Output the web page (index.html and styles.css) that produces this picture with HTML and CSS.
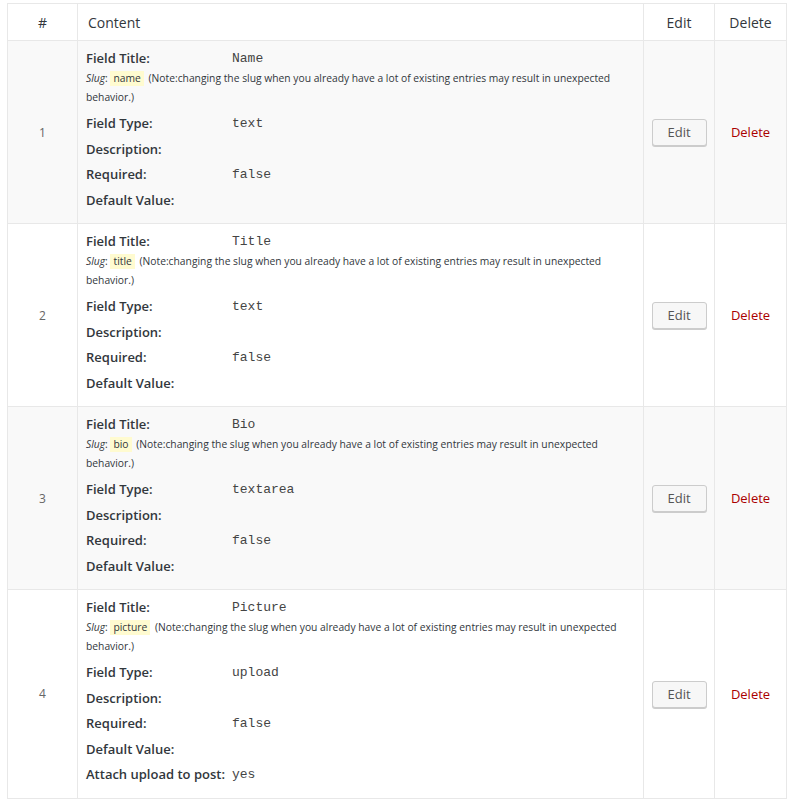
FILE: index.html
```html
<!DOCTYPE html>
<html>
<head>
<meta charset="utf-8">
<link rel="stylesheet" href="styles.css">
</head>
<body>
<table class="fields">
  <colgroup>
    <col class="c-num"><col class="c-content"><col class="c-edit"><col class="c-del">
  </colgroup>
  <thead>
    <tr>
      <th class="num">#</th>
      <th class="content-h">Content</th>
      <th class="center">Edit</th>
      <th class="center">Delete</th>
    </tr>
  </thead>
  <tbody>
    <tr class="alt">
      <td class="num">1</td>
      <td class="content">
        <div class="title-row"><span class="label">Field Title:</span><span class="val">Name</span></div>
        <p class="slug"><em>Slug</em>: <span class="hl">name</span> (Note:changing the slug when you already have a lot of existing entries may result in unexpected behavior.)</p>
        <div class="row"><span class="label">Field Type:</span><span class="val">text</span></div>
        <div class="row"><span class="label">Description:</span><span class="val"></span></div>
        <div class="row"><span class="label">Required:</span><span class="val">false</span></div>
        <div class="row"><span class="label">Default Value:</span><span class="val"></span></div>
      </td>
      <td class="center"><button class="btn">Edit</button></td>
      <td class="center"><a class="del" href="#">Delete</a></td>
    </tr>
    <tr>
      <td class="num">2</td>
      <td class="content">
        <div class="title-row"><span class="label">Field Title:</span><span class="val">Title</span></div>
        <p class="slug"><em>Slug</em>: <span class="hl">title</span> (Note:changing the slug when you already have a lot of existing entries may result in unexpected behavior.)</p>
        <div class="row"><span class="label">Field Type:</span><span class="val">text</span></div>
        <div class="row"><span class="label">Description:</span><span class="val"></span></div>
        <div class="row"><span class="label">Required:</span><span class="val">false</span></div>
        <div class="row"><span class="label">Default Value:</span><span class="val"></span></div>
      </td>
      <td class="center"><button class="btn">Edit</button></td>
      <td class="center"><a class="del" href="#">Delete</a></td>
    </tr>
    <tr class="alt">
      <td class="num">3</td>
      <td class="content">
        <div class="title-row"><span class="label">Field Title:</span><span class="val">Bio</span></div>
        <p class="slug"><em>Slug</em>: <span class="hl">bio</span> (Note:changing the slug when you already have a lot of existing entries may result in unexpected behavior.)</p>
        <div class="row"><span class="label">Field Type:</span><span class="val">textarea</span></div>
        <div class="row"><span class="label">Description:</span><span class="val"></span></div>
        <div class="row"><span class="label">Required:</span><span class="val">false</span></div>
        <div class="row"><span class="label">Default Value:</span><span class="val"></span></div>
      </td>
      <td class="center"><button class="btn">Edit</button></td>
      <td class="center"><a class="del" href="#">Delete</a></td>
    </tr>
    <tr>
      <td class="num">4</td>
      <td class="content">
        <div class="title-row"><span class="label">Field Title:</span><span class="val">Picture</span></div>
        <p class="slug"><em>Slug</em>: <span class="hl">picture</span> (Note:changing the slug when you already have a lot of existing entries may result in unexpected behavior.)</p>
        <div class="row"><span class="label">Field Type:</span><span class="val">upload</span></div>
        <div class="row"><span class="label">Description:</span><span class="val"></span></div>
        <div class="row"><span class="label">Required:</span><span class="val">false</span></div>
        <div class="row"><span class="label">Default Value:</span><span class="val"></span></div>
        <div class="row"><span class="label">Attach upload to post:</span><span class="val">yes</span></div>
      </td>
      <td class="center"><button class="btn">Edit</button></td>
      <td class="center"><a class="del" href="#">Delete</a></td>
    </tr>
  </tbody>
</table>
</body>
</html>
```
FILE: styles.css
```css
html, body {
  margin: 0;
  background: #ffffff;
}
body {
  padding: 3px 0 0 7px;
  font-family: "Open Sans", "Liberation Sans", sans-serif;
  color: #32373c;
}
.fields {
  width: 779px;
  table-layout: fixed;
  border-collapse: collapse;
  border: 1px solid #e1e1e1;
  background: #fff;
}
.c-num { width: 70px; }
.c-content { width: 566px; }
.c-edit { width: 71px; }
.c-del { width: 72px; }
.fields th, .fields td {
  border: 1px solid #e8e8e8;
  padding: 0;
}
.fields th {
  height: 36px;
  font-weight: 400;
  font-size: 14px;
  color: #32373c;
  text-align: center;
  vertical-align: middle;
}
.fields th.content-h {
  text-align: left;
  padding-left: 10px;
}
.fields tr.alt td {
  background: #f9f9f9;
}
.fields td.num {
  text-align: center;
  vertical-align: middle;
  font-size: 12px;
  color: #666;
}
.fields td.center {
  text-align: center;
  vertical-align: middle;
  line-height: 27px;
}
.fields td.content {
  padding: 7px 8px 10px 8px;
  vertical-align: top;
}
.title-row {
  display: flex;
  line-height: 20px;
  height: 21px;
}
.title-row .val {
  line-height: 22px;
}
.row {
  display: flex;
  line-height: 25.5px;
  height: 25.5px;
}
.slug + .row {
  margin-top: 4px;
}
.label {
  width: 146px;
  flex: none;
  font-size: 13px;
  font-weight: 600;
  color: #32373c;
}
.val {
  font-family: "Liberation Mono", "Courier New", monospace;
  font-size: 13px;
  color: #444;
}
.slug {
  margin: 0;
  font-size: 10.3px;
  line-height: 19px;
  color: #32373c;
}
.slug em {
  font-style: italic;
}
.hl {
  display: inline-block;
  background: #fffbd0;
  padding: 0 3px;
  line-height: 15px;
  margin-right: 2px;
}
.btn {
  font-family: "Open Sans", "Liberation Sans", sans-serif;
  font-size: 13px;
  color: #555;
  background: #f7f7f7;
  border: 1px solid #ccc;
  border-radius: 3px;
  box-shadow: 0 1px 0 #ccc;
  width: 55px;
  height: 27px;
  padding: 0;
  line-height: 25px;
  vertical-align: middle;
}
.del {
  font-size: 13px;
  color: #a00;
  text-decoration: none;
  vertical-align: middle;
}
```
